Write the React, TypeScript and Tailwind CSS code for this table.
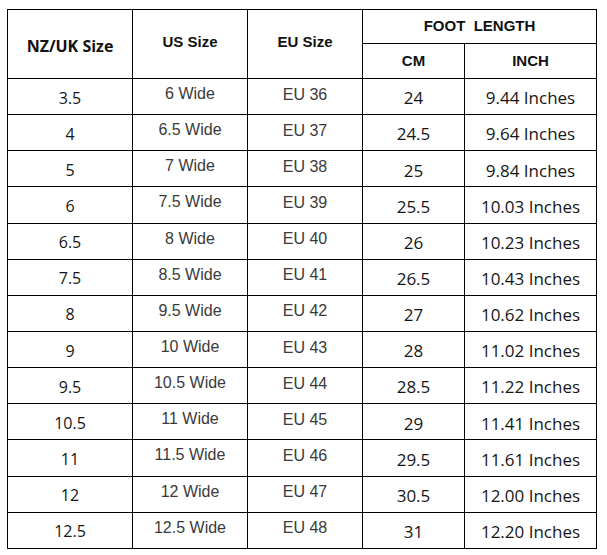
const rows = [
  ["3.5", "6 Wide", "EU 36", "24", "9.44 Inches"],
  ["4", "6.5 Wide", "EU 37", "24.5", "9.64 Inches"],
  ["5", "7 Wide", "EU 38", "25", "9.84 Inches"],
  ["6", "7.5 Wide", "EU 39", "25.5", "10.03 Inches"],
  ["6.5", "8 Wide", "EU 40", "26", "10.23 Inches"],
  ["7.5", "8.5 Wide", "EU 41", "26.5", "10.43 Inches"],
  ["8", "9.5 Wide", "EU 42", "27", "10.62 Inches"],
  ["9", "10 Wide", "EU 43", "28", "11.02 Inches"],
  ["9.5", "10.5 Wide", "EU 44", "28.5", "11.22 Inches"],
  ["10.5", "11 Wide", "EU 45", "29", "11.41 Inches"],
  ["11", "11.5 Wide", "EU 46", "29.5", "11.61 Inches"],
  ["12", "12 Wide", "EU 47", "30.5", "12.00 Inches"],
  ["12.5", "12.5 Wide", "EU 48", "31", "12.20 Inches"],
];

const segoe = "font-['Open_Sans',sans-serif]";
const arial = "font-['Liberation_Sans',Arial,sans-serif]";

export default function App() {
  return (
    <div className="w-[607px] h-[555px] bg-white pl-[7px] pt-[9px]">
      <table className="table-fixed border-collapse w-[589px] text-center">
        <colgroup>
          <col className="w-[125px]" />
          <col className="w-[115px]" />
          <col className="w-[115px]" />
          <col className="w-[102px]" />
          <col className="w-[132px]" />
        </colgroup>
        <thead>
          <tr className="h-[34px]">
            <th
              rowSpan={2}
              className={`border border-black p-0 pt-[3px] text-[16px] font-bold text-[#111] ${segoe}`}
            >
              NZ/UK Size
            </th>
            <th
              rowSpan={2}
              className={`border border-black p-0 pb-[4px] text-[15px] font-bold text-[#111] ${arial}`}
            >
              US Size
            </th>
            <th
              rowSpan={2}
              className={`border border-black p-0 pb-[4px] text-[15px] font-bold text-[#111] ${arial}`}
            >
              EU Size
            </th>
            <th
              colSpan={2}
              className={`border border-black p-0 text-[15px] font-bold text-[#111] whitespace-pre ${arial}`}
            >
              FOOT  LENGTH
            </th>
          </tr>
          <tr className="h-[35px]">
            <th className={`border border-black p-0 text-[15px] font-bold text-[#111] ${arial}`}>
              CM
            </th>
            <th className={`border border-black p-0 text-[15px] font-bold text-[#111] ${arial}`}>
              INCH
            </th>
          </tr>
        </thead>
        <tbody>
          {rows.map((r) => (
            <tr key={r[0]} className="h-[36.15px]">
              <td className={`border border-black p-0 pt-[2px] text-[16px] text-[#161616] ${segoe}`}>
                {r[0]}
              </td>
              <td className={`border border-black p-0 pb-[5px] text-[16px] text-[#3a3a3a] ${arial}`}>
                {r[1]}
              </td>
              <td className={`border border-black p-0 pb-[4px] text-[16px] text-[#3a3a3a] ${arial}`}>
                {r[2]}
              </td>
              <td className={`border border-black p-0 pt-[3px] text-[17px] text-[#161616] ${segoe}`}>
                {r[3]}
              </td>
              <td className={`border border-black p-0 pt-[3px] text-[17px] text-[#161616] ${segoe}`}>
                {r[4]}
              </td>
            </tr>
          ))}
        </tbody>
      </table>
    </div>
  );
}
